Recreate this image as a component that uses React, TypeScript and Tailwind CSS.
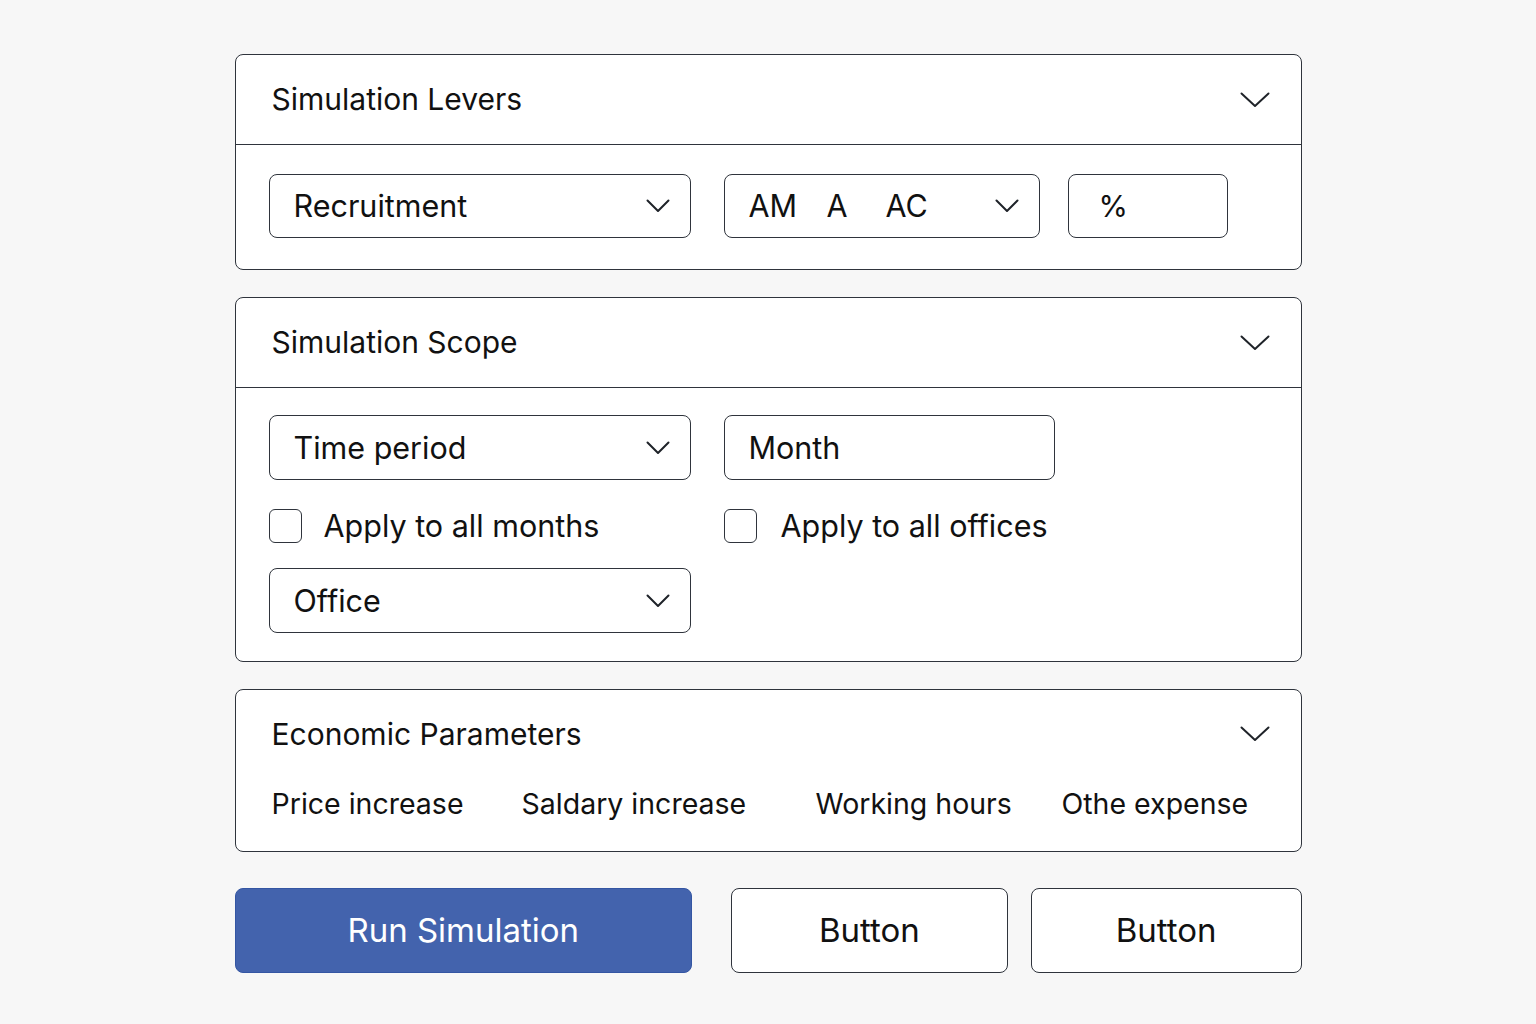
const font = { fontFamily: 'Inter, "Noto Sans", sans-serif' };

function Chevron({ big = false }: { big?: boolean }) {
  return big ? (
    <svg width="30" height="16" viewBox="0 0 30 16" fill="none">
      <path d="M1.5 1.5L15 14L28.5 1.5" stroke="#1f2329" strokeWidth="2" strokeLinecap="round" strokeLinejoin="round" />
    </svg>
  ) : (
    <svg width="24" height="14" viewBox="0 0 24 14" fill="none">
      <path d="M1.5 1.5L12 12L22.5 1.5" stroke="#1f2329" strokeWidth="2" strokeLinecap="round" strokeLinejoin="round" />
    </svg>
  );
}

function Select({ label, className = '' }: { label: React.ReactNode; className?: string }) {
  return (
    <div className={`flex items-center justify-between rounded-[8px] border border-[#2f343c] bg-white pl-6 pr-5 ${className}`}>
      <span className="text-[30.5px] text-[#111]">{label}</span>
      <Chevron />
    </div>
  );
}

function Checkbox({ label, gap }: { label: string; gap: string }) {
  return (
    <label className={`flex h-[34px] items-center ${gap}`}>
      <span className="h-[34px] w-[33px] rounded-[6px] border-[1.5px] border-[#2f343c] bg-white" />
      <span className="text-[30.5px] leading-none text-[#111]">{label}</span>
    </label>
  );
}

function CardHeader({ title }: { title: string }) {
  return (
    <div className="flex h-[90px] items-center justify-between border-b border-[#2f343c] pl-9 pr-[31px]">
      <h2 className="text-[30px] text-[#111]">{title}</h2>
      <Chevron big />
    </div>
  );
}

export default function App() {
  return (
    <div className="min-h-[1024px] bg-[#f7f7f7] pt-[54px]" style={font}>
      <div className="mx-auto flex w-[1067px] flex-col">
        <section className="rounded-[8px] border border-[#2f343c] bg-white">
          <CardHeader title="Simulation Levers" />
          <div className="flex items-center pl-[33px] pt-[29px] pb-[31px]">
            <Select label="Recruitment" className="h-[64px] w-[422px]" />
            <Select
              className="ml-[33px] h-[64px] w-[316px]"
              label={
                <span className="flex">
                  <span className="w-[78px]">AM</span>
                  <span className="w-[59px]">A</span>
                  <span>AC</span>
                </span>
              }
            />
            <div className="ml-[28px] flex h-[64px] w-[160px] items-center rounded-[8px] border border-[#2f343c] pl-[30px] text-[30px] text-[#111]">
              %
            </div>
          </div>
        </section>

        <section className="mt-[27px] rounded-[8px] border border-[#2f343c] bg-white">
          <CardHeader title="Simulation Scope" />
          <div className="flex flex-col pl-[33px] pt-[27px] pb-[28px]">
            <div className="flex items-center">
              <Select label="Time period" className="h-[65px] w-[422px]" />
              <div className="ml-[33px] flex h-[65px] w-[331px] items-center rounded-[8px] border border-[#2f343c] pl-6 text-[30.5px] text-[#111]">
                Month
              </div>
            </div>
            <div className="mt-[29px] flex items-center">
              <div className="w-[455px]">
                <Checkbox label="Apply to all months" gap="gap-[22px]" />
              </div>
              <Checkbox label="Apply to all offices" gap="gap-[24px]" />
            </div>
            <Select label="Office" className="mt-[25px] h-[65px] w-[422px]" />
          </div>
        </section>

        <section className="mt-[27px] rounded-[8px] border border-[#2f343c] bg-white pl-9 pr-[31px] pt-[24px] pb-[28px]">
          <div className="flex h-[40px] items-center justify-between">
            <h2 className="text-[30px] text-[#111]">Economic Parameters</h2>
            <Chevron big />
          </div>
          <div className="mt-[29px] grid h-[40px] grid-cols-[250px_294px_246px_auto] items-center text-[28.5px] text-[#111]">
            <span>Price increase</span>
            <span>Saldary increase</span>
            <span>Working hours</span>
            <span>Othe expense</span>
          </div>
        </section>

        <div className="mt-[36px] flex">
          <button className="h-[85px] w-[458px] rounded-[8px] border border-[#3456a3] bg-[#4363ad] text-[33px] text-white">
            Run Simulation
          </button>
          <button className="ml-[39px] h-[85px] w-[277px] rounded-[8px] border border-[#2f343c] bg-white text-[33px] text-[#111]">
            Button
          </button>
          <button className="ml-[23px] h-[85px] w-[271px] rounded-[8px] border border-[#2f343c] bg-white text-[33px] text-[#111]">
            Button
          </button>
        </div>
      </div>
    </div>
  );
}
